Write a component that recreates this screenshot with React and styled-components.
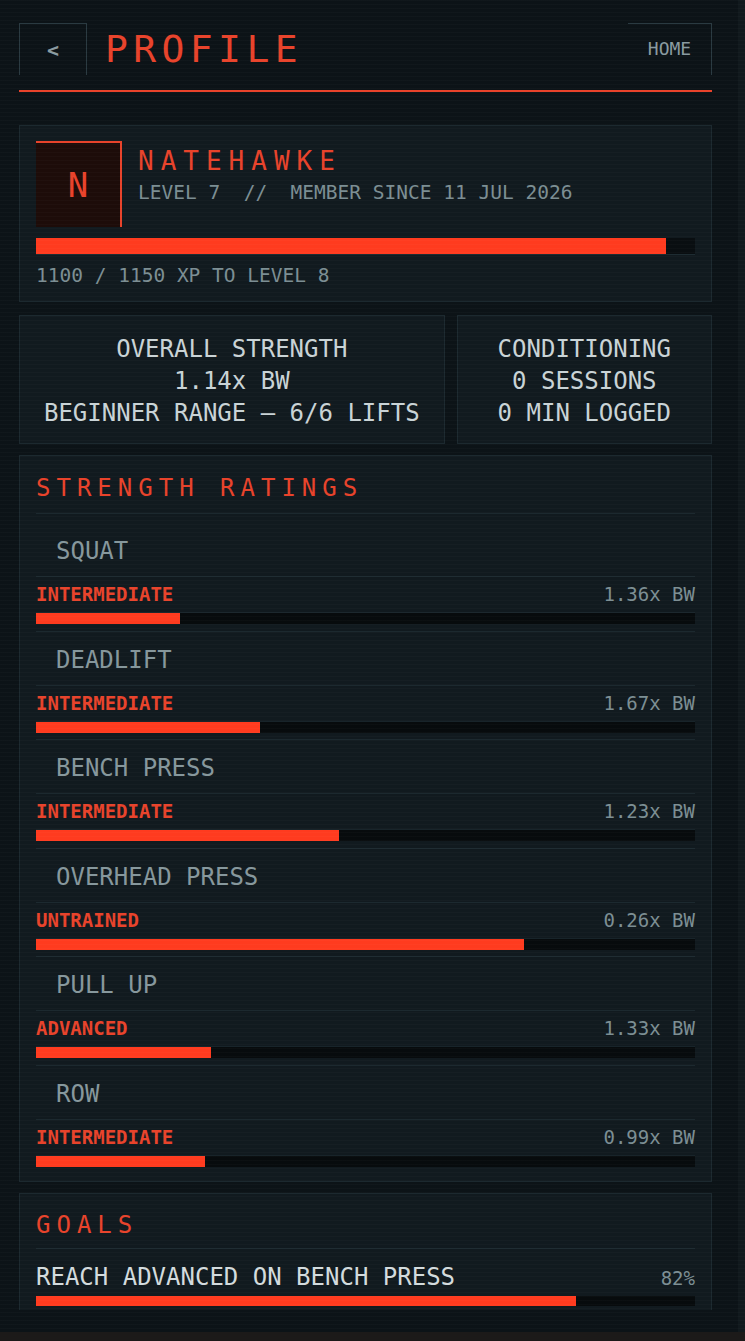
import React from "react";
import styled, { createGlobalStyle } from "styled-components";

const RED = "#ff3b1f";
const RED_TEXT = "#e8432b";
const GREY = "#7c8e93";
const LIGHT = "#c9d3d6";
const LINE = "#1c292f";

const GlobalStyle = createGlobalStyle`
  * { box-sizing: border-box; }
  html, body { margin: 0; padding: 0; }
  body {
    background: #1c1a19;
    font-family: "DejaVu Sans Mono", "Liberation Mono", monospace;
  }
`;

const lifts = [
  { name: "SQUAT", level: "INTERMEDIATE", ratio: "1.36x BW", pct: 21.8 },
  { name: "DEADLIFT", level: "INTERMEDIATE", ratio: "1.67x BW", pct: 34 },
  { name: "BENCH PRESS", level: "INTERMEDIATE", ratio: "1.23x BW", pct: 46 },
  { name: "OVERHEAD PRESS", level: "UNTRAINED", ratio: "0.26x BW", pct: 74 },
  { name: "PULL UP", level: "ADVANCED", ratio: "1.33x BW", pct: 26.6 },
  { name: "ROW", level: "INTERMEDIATE", ratio: "0.99x BW", pct: 25.7 },
];

function App() {
  return (
    <>
      <GlobalStyle />
      <Frame>
        <Scroller>
          <Content>
            <Header>
              <BackButton>&lt;</BackButton>
              <PageTitle>PROFILE</PageTitle>
              <HomeButton>HOME</HomeButton>
            </Header>

            <Card $pad="15px 16px 13px">
              <UserRow>
                <Avatar>N</Avatar>
                <UserInfo>
                  <UserName>NATEHAWKE</UserName>
                  <Meta>LEVEL 7&nbsp;&nbsp;//&nbsp;&nbsp;MEMBER SINCE 11 JUL 2026</Meta>
                </UserInfo>
              </UserRow>
              <XpTrack>
                <Fill style={{ width: `${(1100 / 1150) * 100}%` }} />
              </XpTrack>
              <Meta $mt="9px">1100 / 1150 XP TO LEVEL 8</Meta>
            </Card>

            <StatsGrid>
              <StatCard>
                <StatLine>OVERALL STRENGTH</StatLine>
                <StatLine>1.14x BW</StatLine>
                <StatLine>BEGINNER RANGE — 6/6 LIFTS</StatLine>
              </StatCard>
              <StatCard>
                <StatLine>CONDITIONING</StatLine>
                <StatLine>0 SESSIONS</StatLine>
                <StatLine>0 MIN LOGGED</StatLine>
              </StatCard>
            </StatsGrid>

            <Card $pad="16px 16px 7px">
              <SectionTitle>STRENGTH RATINGS</SectionTitle>
              {lifts.map((lift, i) => (
                <LiftRow key={lift.name} $first={i === 0}>
                  <LiftName>{lift.name}</LiftName>
                  <LiftMeta>
                    <Level>{lift.level}</Level>
                    <Ratio>{lift.ratio}</Ratio>
                  </LiftMeta>
                  <BarTrack>
                    <Fill style={{ width: `${lift.pct}%` }} />
                  </BarTrack>
                </LiftRow>
              ))}
            </Card>

            <Card $pad="15px 16px 4px">
              <SectionTitle $pb="7px">GOALS</SectionTitle>
              <GoalRow>
                <GoalText>REACH ADVANCED ON BENCH PRESS</GoalText>
                <Ratio>82%</Ratio>
              </GoalRow>
              <GoalTrack>
                <Fill style={{ width: "82%" }} />
              </GoalTrack>
            </Card>
          </Content>
        </Scroller>
      </Frame>
    </>
  );
}

const Frame = styled.div`
  position: relative;
  width: 745px;
  height: 1332px;
  background: #11191d;
  &::after {
    content: "";
    position: absolute;
    inset: 0;
    pointer-events: none;
    background: repeating-linear-gradient(
      to bottom,
      rgba(255, 255, 255, 0.018) 0px,
      rgba(255, 255, 255, 0.018) 1px,
      transparent 1px,
      transparent 4px
    );
  }
`;

const Scroller = styled.div`
  width: 738px;
  height: 1332px;
  background: #0c1317;
  padding-bottom: 22px;
`;

const Content = styled.div`
  height: 1310px;
  overflow: hidden;
  padding: 23px 26px 0 19px;
  display: flex;
  flex-direction: column;
  gap: 11px;
`;

const Header = styled.header`
  display: flex;
  align-items: center;
  height: 52px;
  box-sizing: content-box;
  padding-bottom: 15px;
  border-bottom: 2px solid ${RED_TEXT};
  margin-bottom: 22px;
`;

const NavBox = styled.div`
  height: 52px;
  display: flex;
  align-items: center;
  justify-content: center;
  color: #8a9ba0;
  border-top: 1px solid #2a3a41;
  border-right: 1px solid #2a3a41;
`;

const BackButton = styled(NavBox)`
  width: 68px;
  border-left: 1px solid #2a3a41;
  font-size: 20px;
  font-weight: bold;
`;

const HomeButton = styled(NavBox)`
  width: 84px;
  margin-left: auto;
  font-size: 18px;
  padding-bottom: 2px;
`;

const PageTitle = styled.h1`
  margin: 0 0 0 18px;
  font-size: 38px;
  font-weight: normal;
  letter-spacing: 5.4px;
  color: ${RED_TEXT};
  line-height: 1;
`;

const Card = styled.section`
  background: #111a1f;
  border: 1px solid ${LINE};
  padding: ${(p) => p.$pad};
`;

const UserRow = styled.div`
  display: flex;
  gap: 16px;
`;

const Avatar = styled.div`
  width: 86px;
  height: 86px;
  flex: none;
  background: #1d0c09;
  border-top: 2px solid ${RED_TEXT};
  border-right: 2px solid ${RED_TEXT};
  color: ${RED_TEXT};
  font-size: 34px;
  display: flex;
  align-items: center;
  justify-content: center;
`;

const UserInfo = styled.div`
  padding-top: 4px;
  display: flex;
  flex-direction: column;
  gap: 4px;
`;

const UserName = styled.div`
  font-size: 26px;
  line-height: 32px;
  letter-spacing: 7px;
  color: ${RED_TEXT};
`;

const Meta = styled.div`
  font-size: 19.5px;
  line-height: 24px;
  color: ${GREY};
  margin-top: ${(p) => p.$mt || 0};
  white-space: nowrap;
`;

const XpTrack = styled.div`
  margin-top: 11px;
  height: 17px;
  background: #090e11;
  border-bottom: 1px solid #1e2c32;
  display: flex;
`;

const Fill = styled.div`
  height: 100%;
  background: ${RED};
`;

const StatsGrid = styled.div`
  display: grid;
  grid-template-columns: 5fr 3fr;
  gap: 12px;
  margin-top: 2px;
`;

const StatCard = styled.div`
  background: #111a1f;
  border: 1px solid ${LINE};
  padding: 17px 8px 14px;
  text-align: center;
`;

const StatLine = styled.div`
  font-size: 24px;
  line-height: 32px;
  color: ${LIGHT};
  white-space: nowrap;
`;

const SectionTitle = styled.h2`
  margin: 0;
  font-size: 24px;
  font-weight: normal;
  line-height: 32px;
  letter-spacing: 6px;
  color: ${RED_TEXT};
  padding-bottom: ${(p) => p.$pb || "9px"};
  border-bottom: 1px solid ${LINE};
`;

const LiftRow = styled.div`
  padding-top: 12px;
  margin-top: ${(p) => (p.$first ? "9px" : "0")};
  border-top: ${(p) => (p.$first ? "none" : `1px solid ${LINE}`)};
  height: ${(p) => (p.$first ? "107.6px" : "108.6px")};
`;

const LiftName = styled.div`
  font-size: 24px;
  line-height: 32px;
  color: #86979c;
  padding-left: 20px;
  padding-bottom: 9px;
  border-bottom: 1px solid ${LINE};
`;

const LiftMeta = styled.div`
  display: flex;
  justify-content: space-between;
  align-items: baseline;
  padding-top: 5px;
  line-height: 24px;
`;

const Level = styled.span`
  font-size: 19px;
  font-weight: bold;
  color: ${RED_TEXT};
`;

const Ratio = styled.span`
  font-size: 19px;
  color: ${GREY};
`;

const BarTrack = styled.div`
  margin-top: 6px;
  height: 12px;
  background: #070b0d;
  border-top: 1px solid #18242a;
  display: flex;
`;

const GoalRow = styled.div`
  margin-top: 12px;
  display: flex;
  justify-content: space-between;
  align-items: baseline;
`;

const GoalText = styled.span`
  font-size: 24px;
  line-height: 32px;
  color: #d3dbdd;
`;

const GoalTrack = styled(BarTrack)`
  margin-top: 3px;
  height: 10px;
  border-top: none;
`;

export default App;
